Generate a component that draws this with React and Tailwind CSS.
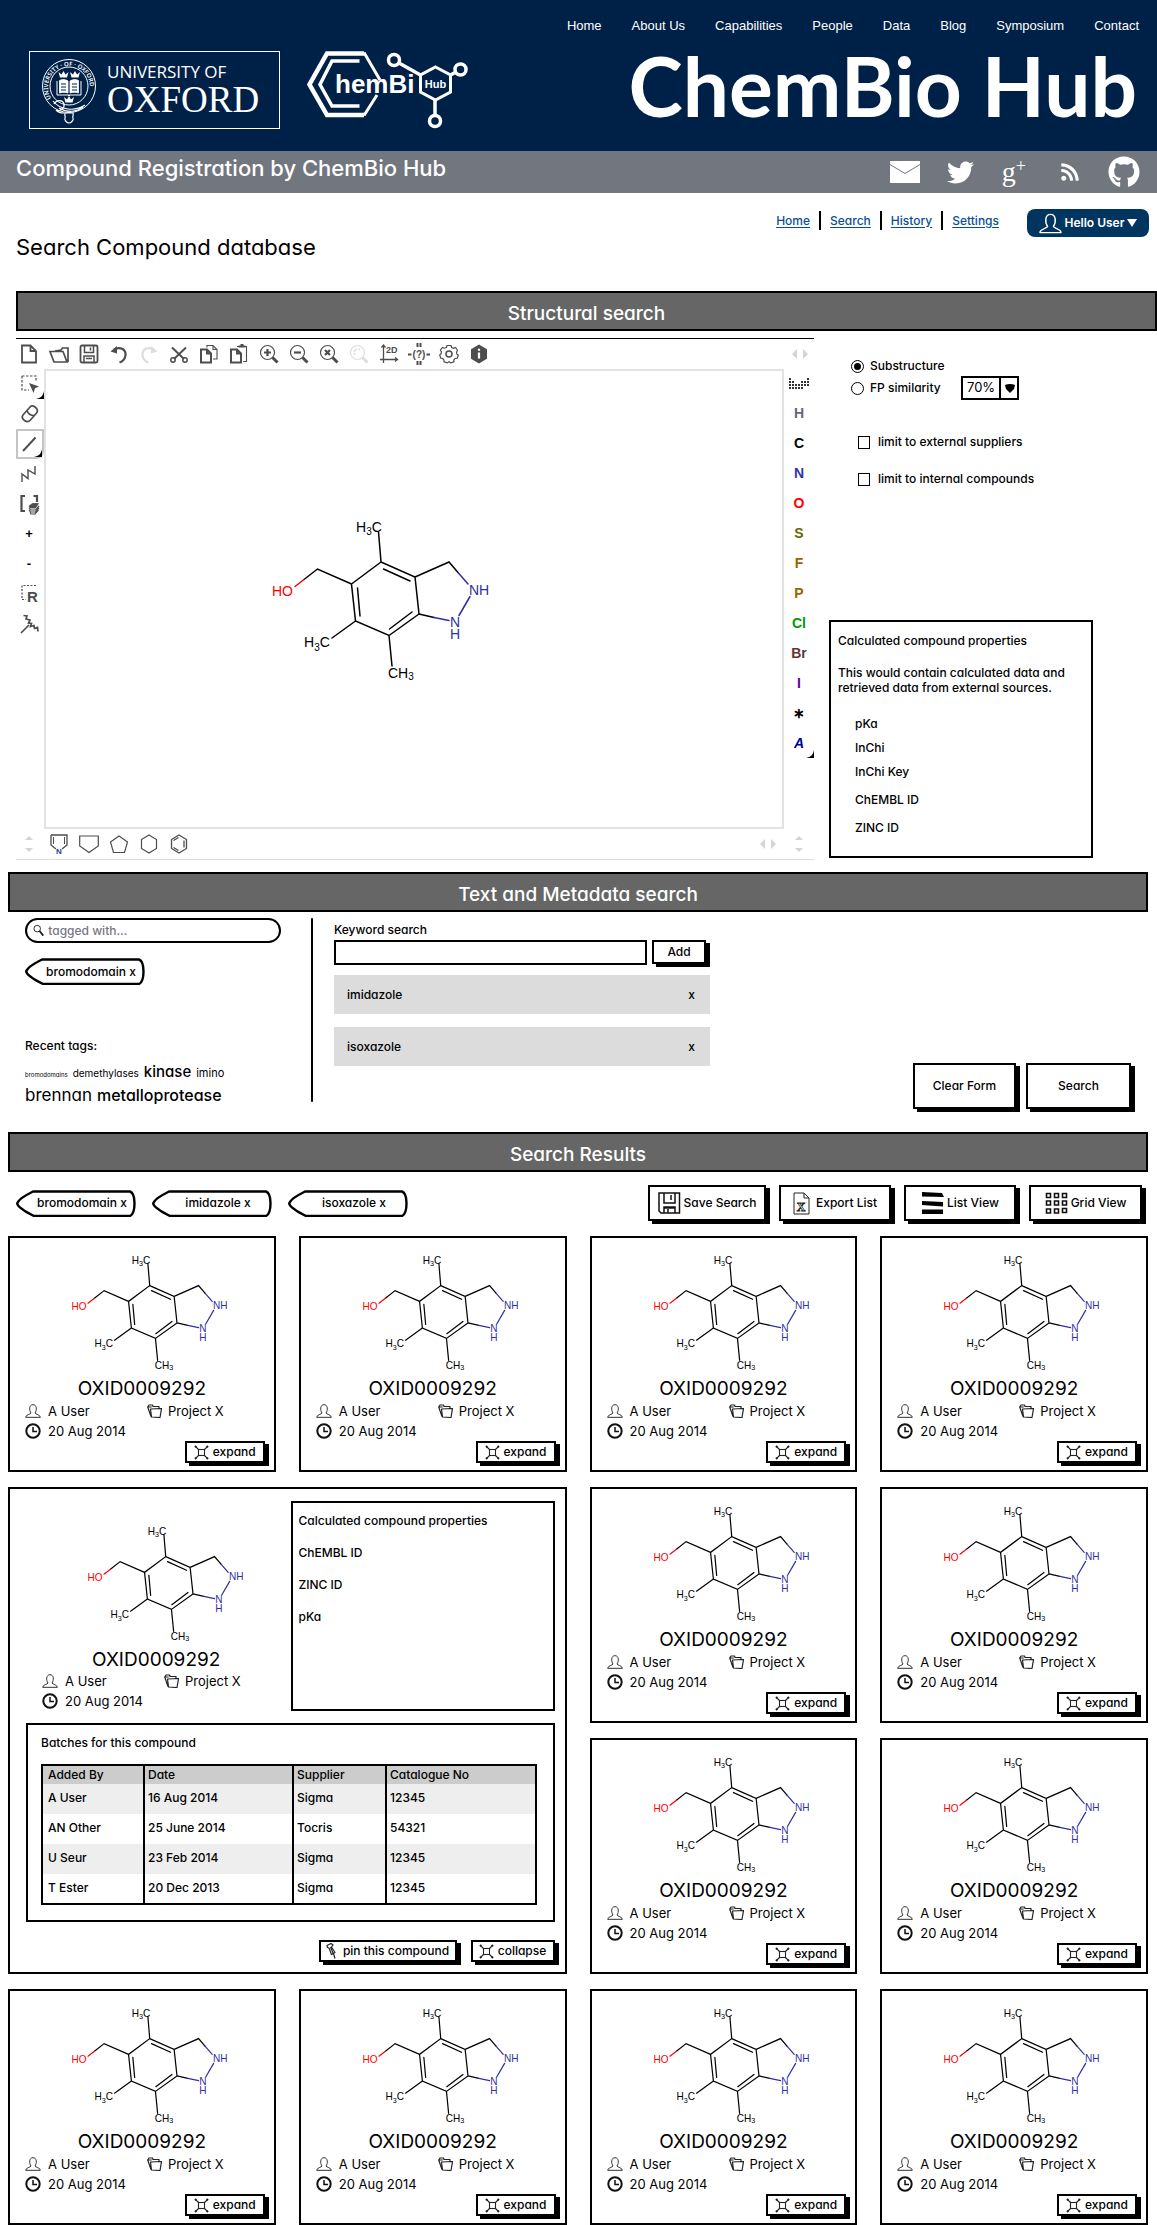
import React from "react";
import { FaTwitter, FaRss, FaGithub } from "react-icons/fa";

const box = "border-2 border-black bg-white";
const raised =
  "flex items-center justify-center border-2 border-black bg-white shadow-[4px_3px_0_#000] cursor-pointer whitespace-nowrap";

/* ---------- header drawings ---------- */

function OxfordCrest() {
  return (
    <svg width="54" height="66" viewBox="0 0 54 66" fill="none" stroke="#fff" className="overflow-visible" role="img" aria-label="University crest">
      <defs>
        <path id="crest-ring" d="M10.500 42 A21 21 0 1 1 43.500 42" />
      </defs>
      <circle cx="27" cy="28" r="26.500" strokeWidth="1" />
      <circle cx="27" cy="28" r="19" strokeWidth="1" />
      <text fill="#fff" stroke="none" fontSize="6" fontWeight="600" fontFamily="Noto Sans, sans-serif">
        <textPath href="#crest-ring" startOffset="2">UNIVERSITY · OF · OXFORD</textPath>
      </text>
      <path d="M17.500 22.500c3-1.500 6-1 8.500.5v12c-2.500-1-5.500-1-8.500 0zM28 23c2.500-1.500 5.500-2 8.500-.5V35c-3-1-6-1-8.500 0z" fill="#fff" strokeWidth=".8" />
      <path d="M19 26h5M19 29h5M19 32h5M30 26h5M30 29h5M30 32h5" stroke="#002147" strokeWidth="1" />
      <path d="M15 23v14h24V23M26 37l1 1 1-1" strokeWidth="1" />
      <path d="M18 19.500h7l1.500-5.500-3 2.500-2-3.500-2 3.500-3-2.500zM29.500 19.500h7l1.500-5.500-3 2.500-2-3.500-2 3.500-3-2.500zM23.500 44.500h7l1.500-5.500-3 2.500-2-3.500-2 3.500-3-2.500z" fill="#fff" stroke="none" />
      <path d="M12 46c3-5 9-4 10 0s-4 8-8 6M17 50c8 5 18 4 24-1M11 43c7 9 22 11 32 4M14 52c2 2 5 3 8 3" strokeWidth="1.200" />
      <path d="M23 55c-1 3 1 3 0 5s2 5 4 5 5-3 4-5 1-2 0-5z" strokeWidth="1.200" />
    </svg>
  );
}

function ChemBioLogo() {
  return (
    <svg width="162" height="78" viewBox="307 51 162 78" fill="none" stroke="#fff" role="img" aria-label="ChemBio Hub logo">
      <path d="M364 53.500 H327 L309.500 84.500 L327 115 H364" strokeWidth="4.500" />
      <path d="M364 52.500 L380 80 M364 115.500 L377 95" strokeWidth="3" />
      <path d="M359.500 61 H332 L320 84.500 L332 106 H359.500" strokeWidth="3.500" />
      <text x="335" y="93" fill="#fff" stroke="none" fontSize="26" fontWeight="700" fontFamily="Liberation Sans, sans-serif">hemBi</text>
      <path d="M435.500 67 L450.500 75 V92 L435.500 100 L420.500 92 V75 Z" strokeWidth="3" />
      <text x="435.500" y="88" textAnchor="middle" fill="#fff" stroke="none" fontSize="11" fontWeight="700" fontFamily="Liberation Sans, sans-serif">Hub</text>
      <path d="M399 63 L420.500 75 M450.500 75 L456 72 M435 100 V115" strokeWidth="3.500" />
      <circle cx="394" cy="60" r="5.500" strokeWidth="3.500" />
      <circle cx="460.500" cy="69.500" r="5.500" strokeWidth="3.500" />
      <circle cx="435" cy="121" r="5.500" strokeWidth="3.500" />
    </svg>
  );
}

/* ---------- molecule ---------- */

function Molecule({ className, thin }) {
  const blue = "#3030a0";
  return (
    <svg className={"overflow-visible " + className} viewBox="270 518 220 162" fill="none" stroke="#000" strokeWidth={thin ? 1.7 : 1.5} strokeLinecap="round" role="img" aria-label="Compound structure">
      <path d="M378.500 532 L381 562 M381 562 L415 577 L419 614 L389 635.500 L355.500 621 L351.500 584 Z M383.500 569 L410 581 M357.500 588 L360 616 M412 612 L389.500 629 M351.500 584 L317.500 569 L304 579.500 M355.500 621 L332 638 M389 635.500 L392 666 M415 577 L449 562 L458 572.500 M419 614 L434 617.500" />
      <path d="M304 579.500 L295 586.500" stroke="#f00" />
      <path d="M458 572.500 L468 584 M434 617.500 L449 620.500 M459 615.500 L470 596.500" stroke={blue} />
      <g stroke="none" fill="#000" fontSize="14" fontFamily="Liberation Sans, sans-serif">
        <text x="356" y="532">H<tspan fontSize="10" dy="3">3</tspan><tspan dy="-3">C</tspan></text>
        <text x="304" y="647">H<tspan fontSize="10" dy="4">3</tspan><tspan dy="-4">C</tspan></text>
        <text x="388" y="678">CH<tspan fontSize="10" dy="2">3</tspan></text>
        <text x="272" y="596" fill="#f00">HO</text>
        <text x="469" y="595" fill={blue}>NH</text>
        <text x="450" y="627" fill={blue}>N</text>
        <text x="450" y="639" fill={blue}>H</text>
      </g>
    </svg>
  );
}

/* ---------- editor icons ---------- */

function Ico({ children, faded, size = 20 }) {
  return (
    <svg width={size} height={size} viewBox="0 0 20 20" fill="none" stroke={faded ? "#ddd" : "#4d4d4d"} strokeWidth="1.500" className="overflow-visible">
      {children}
    </svg>
  );
}

const lens = (
  <>
    <circle cx="8.500" cy="8.500" r="7" strokeWidth="1.200" />
    <path d="M13.500 13.500l5 5" strokeWidth="3" />
  </>
);

const topTools = [
  ["New", <Ico key="i"><path d="M3 1.500h8.500l5.500 5.500v11.500H3zM11.500 1.500V7H17" strokeWidth="1.800" /></Ico>],
  ["Open", <Ico key="i"><path d="M1 7.500h13l4 10.500H5zM6 7l6-1 1.500-2H19v14" strokeWidth="1.700" /></Ico>],
  ["Save", <Ico key="i"><rect x="1.500" y="1.500" width="17" height="17" rx="1.500" strokeWidth="1.800" /><path d="M5.500 2v6.500h9V2M11.500 3.500v3M5 18v-6h10v6M7 14.500h6" /></Ico>],
  ["Undo", <Ico key="i"><path d="M5 5.500C12 2 17 6 16.500 11c-.3 4-3 6.500-6 7.500" strokeWidth="2.200" /><path d="M1.500 7.500L8 2v7.500z" fill="#4d4d4d" stroke="none" /></Ico>],
  ["Redo", <Ico key="i" faded><path d="M15 5.500C8 2 3 6 3.500 11c.3 4 3 6.500 6 7.500" strokeWidth="2.200" /><path d="M18.500 7.500L12 2v7.500z" fill="#ddd" stroke="none" /></Ico>],
  ["Cut", <Ico key="i"><path d="M3 3.500L15 15M17 3.500L5 15" strokeWidth="1.900" /><circle cx="4" cy="16" r="2.200" /><circle cx="16" cy="16" r="2.200" /></Ico>],
  ["Copy", <Ico key="i"><path d="M2 5.500h6l4 4v9H2zM8 5.500v4h4" strokeWidth="2" /><path d="M8 3.500V1.500h6l4 4V15h-4M14 1.500v4h4" strokeWidth="1.100" /></Ico>],
  ["Paste", <Ico key="i"><path d="M2 5.500h6l4 4v9H2zM8 5.500v4h4" strokeWidth="2" /><path d="M8 2.500h9.500v15H14" strokeWidth="1.100" /><path d="M9.500 3.500V1.500h2V0h3v1.500h2v2z" fill="#4d4d4d" stroke="none" /></Ico>],
  ["Zoom in", <Ico key="i">{lens}<path d="M8.500 5v7M5 8.500h7" strokeWidth="2.200" /></Ico>],
  ["Zoom out", <Ico key="i">{lens}<path d="M5 8.500h7" strokeWidth="2.200" /></Ico>],
  ["Zoom reset", <Ico key="i">{lens}<path d="M6 6l5 5M11 6l-5 5" strokeWidth="2.200" /></Ico>],
  ["Zoom selection", <Ico key="i" faded>{lens}<path d="M5.500 11V5.500H11" strokeDasharray="2 1" /></Ico>],
  ["Clean 2D", <Ico key="i"><path d="M4.500 1v18M1 15.500h17M2.500 3.500l2-2.500 2 2.500M16 13.500l2.500 2-2.500 2" strokeWidth="1.300" /><text x="7" y="8.500" fontSize="9" fontWeight="700" fill="#4d4d4d" stroke="none" fontFamily="Liberation Sans, sans-serif">2D</text></Ico>],
  ["Check structure", <svg key="i" width="24" height="24" viewBox="0 0 24 24" stroke="#4d4d4d" strokeWidth="2"><path d="M10.500 1v4M13.500 1v4M10.500 19v4M13.500 19v4M1 12.500h3.500M19.500 12.500H23" /><text x="12" y="15.500" textAnchor="middle" fontSize="10" fontWeight="700" fill="#4d4d4d" stroke="none" fontFamily="Liberation Sans, sans-serif">(?)</text></svg>],
  ["Options", <Ico key="i"><path d="M8 1.500h4l.6 2 2 .9 1.900-1 2 2.800-1 1.800.3 2 1.500 1.200-1 3-2.300.3-1.200 1.400.2 2-3.200 1-1.800-1.200-1.900 1.200-3-1-.2-2-1.200-1.400-2-.5-1-3 1.400-1.200.3-2-1-1.800 2-2.600 2 .8 2-.7z" strokeWidth="1.200" /><circle cx="10" cy="10" r="3" /></Ico>],
  ["About", <Ico key="i"><path d="M10 .5l8 4.700v9.600l-8 4.700-8-4.700V5.200z" fill="#4d4d4d" stroke="none" /><path d="M10 8.500v6M10 4.700v2" stroke="#fff" strokeWidth="2.200" /></Ico>],
];

const sideTools = [
  ["Select", <Ico key="i"><path d="M3 2h14v6M3 2v14h7" strokeDasharray="2.500 1.500" strokeWidth="1.200" /><path d="M10 9l10 3.500-4 1.700L14.500 19z" fill="#4d4d4d" stroke="none" /></Ico>],
  ["Erase", <Ico key="i"><path d="M4 11l7-8c1.500-1.500 3-1.500 5 0s3.500 4 1.500 6l-6 7c-2 2-4 2-6 .500S2.500 13 4 11zM8 6.500c1 3 4 5 7 5" strokeWidth="1.700" /></Ico>],
  ["Bond", <Ico key="i"><path d="M4 17L16.500 3.500" strokeWidth="1.900" /></Ico>],
  ["Chain", <Ico key="i"><path d="M3 18v-8l6 4.500V6l7 4V2" strokeWidth="1.400" /></Ico>],
  ["Template group", <Ico key="i"><path d="M6 2H2.500v15H6M14.500 2H18v6" strokeWidth="2.200" /><path d="M10 12l3.500-2.500h6l-3 4.500H11z" fill="#4d4d4d" strokeWidth=".8" /><path d="M10 14l1.500 2h5l3.500-4M10 16l1.500 2h5l3.500-4M11 18.500l1 1.500h4l3.500-4" strokeWidth="1.200" /></Ico>],
  ["Increase charge", <b key="i">+</b>],
  ["Decrease charge", <b key="i">-</b>],
  ["R group", <Ico key="i"><path d="M17 1.500H3v14h4" strokeDasharray="2 1.500" strokeWidth="1.200" /><text x="8" y="17.500" fontSize="15" fontWeight="700" fill="#4d4d4d" stroke="none" fontFamily="Liberation Sans, sans-serif">R</text></Ico>],
  ["Fragment", <Ico key="i"><path d="M2 19L10 11M4.500 1.500l3.500.5-1 3 4 1-1.500 3 3 .5-1 3 3.500-1 .5 3 3-1 .5 4" strokeWidth="1.700" /></Ico>],
];

const atoms = [
  ["H", "text-[#666677]"],
  ["C", "text-black"],
  ["N", "text-[#3333aa]"],
  ["O", "text-[#ff0000]"],
  ["S", "text-[#666600]"],
  ["F", "text-[#996600]"],
  ["P", "text-[#996600]"],
  ["Cl", "text-[#009900]"],
  ["Br", "text-[#663333]"],
  ["I", "text-[#660099]"],
  ["∗", "text-black"],
  ["A", "text-[#000099] italic"],
];

function Corner() {
  return (
    <svg className="absolute right-0 bottom-0" width="8" height="8" viewBox="0 0 8 8">
      <path d="M8 0v8H0C5 7 7 5 8 0z" fill="#000" />
    </svg>
  );
}

function ArrowsH() {
  return (
    <svg width="16" height="10" viewBox="0 0 16 10" fill="#d4d4d4"><path d="M5 0v10L0 5zM11 0v10l5-5z" /></svg>
  );
}

function ArrowsV() {
  return (
    <svg width="10" height="16" viewBox="0 0 10 16" fill="#d4d4d4"><path d="M1 4h8L5 0zM1 12h8l-4 4z" /></svg>
  );
}

const rings = [
  ["Pyrrole", <Ico key="i"><path d="M2 1h16v10l-5 4M7 15l-5-4V1" strokeWidth="1.300" /><path d="M4.500 3v7M15.500 3v7" strokeWidth="1" /><text x="10" y="20" textAnchor="middle" fontSize="8" fill="#3333aa" stroke="none" fontWeight="700" fontFamily="Liberation Sans, sans-serif">N</text></Ico>],
  ["Cyclopentane wide", <Ico key="i"><path d="M.700 2h18.600v10L10 18.500.700 12z" strokeWidth="1.200" /></Ico>],
  ["Cyclopentane", <Ico key="i"><path d="M10 2l8.500 6-3 10.500h-11L1.500 8z" strokeWidth="1.200" /></Ico>],
  ["Cyclohexane", <Ico key="i"><path d="M10 1l7.500 4.500v9L10 19l-7.500-4.500v-9z" strokeWidth="1.200" /></Ico>],
  ["Benzene", <Ico key="i"><path d="M10 1l7.500 4.500v9L10 19l-7.500-4.500v-9zM15 6.500v7M9.500 16.500L4.500 13.500M4.500 6.500l5-3" strokeWidth="1.300" /></Ico>],
];

function StructureEditor() {
  return (
    <div className="w-[798px] shrink-0 border-t border-b border-t-black border-b-[#dddddd] font-['Liberation_Sans',sans-serif]">
      <div className="flex h-[30px] items-center">
        <div className="-ml-0.5 flex">
          {topTools.map(([name, icon]) => (
            <button key={name} aria-label={name} className="flex h-[30px] w-[30px] items-center justify-center">{icon}</button>
          ))}
        </div>
        <div className="mr-1.5 ml-auto"><ArrowsH /></div>
      </div>
      <div className="flex">
        <div className="w-7 text-center text-[13px]">
          {sideTools.map(([name, icon], i) => (
            <button
              key={name}
              aria-label={name}
              className={
                "relative flex h-[30px] w-full items-center justify-center pr-0.5 " +
                (i === 2 ? "rounded-br-lg border-2 border-[#c4c4c4]" : "")
              }
            >
              {icon}
              {(i === 0 || i === 2) && <Corner />}
            </button>
          ))}
        </div>
        <div className="relative h-[460px] flex-1 border-2 border-[#e2e2e2] bg-white">
          <Molecule className="absolute top-[147px] left-[224px] w-[220px]" />
        </div>
        <div className="w-[30px] text-[14px] font-bold">
          <button aria-label="Periodic table" className="flex h-[29px] w-full items-center justify-center">
            <svg width="20" height="14" viewBox="0 0 20 14" stroke="#333" strokeWidth="2" strokeDasharray="2 1">
              <path d="M0 2h2.500M18 2h2M0 5h5M12 5h8M0 8h20M0 11h14" />
            </svg>
          </button>
          {atoms.map(([a, c]) => (
            <button key={a} className={"relative flex h-[30px] w-full items-center justify-center " + c}>
              {a}
              {a === "A" && <Corner />}
            </button>
          ))}
        </div>
      </div>
      <div className="flex h-[30px] items-center">
        <div className="flex w-7 justify-center pr-0.5"><ArrowsV /></div>
        {rings.map(([name, icon]) => (
          <button key={name} aria-label={name} className="flex h-[30px] w-[30px] items-center justify-center">{icon}</button>
        ))}
        <div className="mr-[18px] ml-auto"><ArrowsH /></div>
        <div className="mr-2.5"><ArrowsV /></div>
      </div>
    </div>
  );
}

/* ---------- small icons ---------- */

function Person({ size = 16, color = "#333" }) {
  return (
    <svg width={size} height={size} viewBox="0 0 24 22" fill="none" stroke={color} strokeWidth="1.500" strokeLinejoin="round" aria-hidden="true">
      <path d="M9 14C6 10 6 1.500 12 1.500S18 10 15 14c.5 2 8 2.500 8 6.500H1C1 16.500 8.500 16 9 14z" />
    </svg>
  );
}

function Folder() {
  return (
    <svg width="15" height="14" viewBox="0 0 15 14" fill="none" stroke="#222" strokeWidth="1.200" strokeLinejoin="round" aria-hidden="true">
      <path d="M4 12.500L.700 3 2 1h3.500l.5 1.500h6V4.500M4.500 13L3.500 5l11-.500L13 13.500zM.700 3h4" />
    </svg>
  );
}

function Clock() {
  return (
    <svg width="16" height="16" viewBox="0 0 16 16" fill="none" stroke="#111" strokeWidth="2" aria-hidden="true">
      <circle cx="8" cy="8" r="6.700" /><path d="M8 4v4.500h4" strokeWidth="1.500" />
    </svg>
  );
}

function Resize() {
  return (
    <svg width="15" height="15" viewBox="0 0 15 15" fill="none" stroke="#222" strokeWidth="1.100" aria-hidden="true">
      <rect x="4.500" y="4.500" width="6" height="6" />
      <path d="M4.500 4.500L1 1M10.500 4.500L14 1M4.500 10.500L1 14M10.500 10.500L14 14" />
      <path d="M1 1l2 .5M14 1l-2 .5M1 14l2-.5M14 14l-2-.5M1 1l.5 2M14 1l-.5 2M1 14l.5-2M14 14l-.5-2" strokeWidth=".8" />
    </svg>
  );
}

function Pin() {
  return (
    <svg width="11" height="16" viewBox="0 0 11 16" fill="none" stroke="#222" strokeWidth="1.200" strokeLinejoin="round" aria-hidden="true">
      <path d="M1 2.500L5 .500 7 2 5.500 4 9 9.500 5.500 11.500 3 5 1.500 4.500zM7.500 10.500l1.500 5M4.500 4l2.500 6" />
    </svg>
  );
}

/* ---------- building blocks ---------- */

function Banner({ children }) {
  return (
    <h2 className="flex h-10 items-center justify-center border-2 border-black bg-[#666666] pt-1.5 text-[19px] font-medium text-white">
      {children}
    </h2>
  );
}

function Tag({ children }) {
  return (
    <button className="relative flex h-[27px] w-[120px] items-center justify-center pl-3">
      <svg className="absolute inset-0 h-full w-full" viewBox="0 0 120 27" fill="none" stroke="#000" strokeWidth="2.400" strokeLinejoin="round" aria-hidden="true">
        <path d="M17 1.500 H114 Q118.500 3 118.500 13.500 Q118.500 24 114 26 H18 Q2 18 1.200 13.500 Q2 9 17 1.500z" />
      </svg>
      <span className="relative">{children} x</span>
    </button>
  );
}

function Meta() {
  return (
    <div className="text-[13px] leading-5 font-normal">
      <div className="flex items-center">
        <Person /><span className="ml-[7px] w-[99px]">A User</span>
        <Folder /><span className="ml-1.5">Project X</span>
      </div>
      <div className="flex items-center"><Clock /><span className="ml-[7px]">20 Aug 2014</span></div>
    </div>
  );
}

function Card() {
  return (
    <article className={box + " flex h-[236px] flex-col pt-4"}>
      <Molecule thin className="ml-15 w-[158px] shrink-0" />
      <h3 className="mt-[7px] text-center text-[19px] leading-6 font-normal">OXID0009292</h3>
      <div className="pl-[15px]"><Meta /></div>
      <button className={raised + " mt-auto mr-[9px] mb-[8px] h-[22px] w-20 gap-1 self-end"}>
        <Resize />expand
      </button>
    </article>
  );
}

const batches = [
  ["A User", "16 Aug 2014", "Sigma", "12345"],
  ["AN Other", "25 June 2014", "Tocris", "54321"],
  ["U Seur", "23 Feb 2014", "Sigma", "12345"],
  ["T Ester", "20 Dec 2013", "Sigma", "12345"],
];

function ExpandedCard() {
  return (
    <article className={box + " col-span-2 row-span-2 flex flex-col px-2.5 pt-3"}>
      <div className="flex pl-1.5">
        <div className="flex-1 pt-6">
          <Molecule thin className="ml-15 w-[158px]" />
          <h3 className="mt-2 ml-[66px] text-[19px] leading-[22px] font-normal">OXID0009292</h3>
          <div className="pl-4"><Meta /></div>
        </div>
        <div className={box + " h-[210px] w-[264px] px-1.5 pt-1.5"}>
          <p className="leading-6">Calculated compound properties</p>
          <p className="mt-2 leading-6">ChEMBL ID</p>
          <p className="mt-2 leading-6">ZINC ID</p>
          <p className="mt-2 leading-6">pKa</p>
        </div>
      </div>
      <div className={box + " mt-3 ml-1.5 h-[199px] px-[13px] pt-1.5"}>
        <p className="leading-6">Batches for this compound</p>
        <table className="mt-[9px] w-full max-w-[496px] border-2 border-black text-left">
          <thead>
            <tr className="bg-[#cccccc]">
              {["Added By", "Date", "Supplier", "Catalogue No"].map((h, i) => (
                <th
                  key={h}
                  className={
                    "h-[18px] border-r-2 border-black p-0 leading-[18px] font-medium " +
                    ["w-[102px] pl-[5px]", "w-[149px] pl-[3px]", "w-[93px] pl-[3px]", "pl-[3px]"][i]
                  }
                >
                  {h}
                </th>
              ))}
            </tr>
          </thead>
          <tbody>
            {batches.map((r) => (
              <tr key={r[0]} className="odd:bg-[#eeeeee]">
                {r.map((c, i) => (
                  <td key={i} className={"h-[30px] border-r-2 border-black p-0 pb-0.5 " + (i === 0 ? "pl-[5px]" : "pl-[3px]")}>{c}</td>
                ))}
              </tr>
            ))}
          </tbody>
        </table>
      </div>
      <div className="mt-auto mb-[10px] flex justify-end gap-[14px]">
        <button className={raised + " h-[22px] w-[138px] gap-1.5"}><Pin />pin this compound</button>
        <button className={raised + " h-[22px] w-[84px] gap-1"}><Resize />collapse</button>
      </div>
    </article>
  );
}

const navItems = ["Home", "About Us", "Capabilities", "People", "Data", "Blog", "Symposium", "Contact"];
const subNav = ["Home", "Search", "History", "Settings"];

export default function App() {
  return (
    <div className="overflow-hidden bg-white font-[Inter,sans-serif] text-[12px] font-medium text-black [font-feature-settings:'cv11']">
      <header className="flex justify-between bg-[#002147] pr-[18px] pl-[29px] font-normal text-white">
        <div className="flex gap-[27px] pt-[51px] pb-[22px]">
          <div className="flex h-[78px] w-[251px] border border-white pt-1.5 pl-3">
            <OxfordCrest />
            <div className="ml-[11px] whitespace-nowrap">
              <div className="mt-1 font-['Open_Sans',sans-serif] text-[17px] leading-5">UNIVERSITY OF</div>
              <div className="font-['Liberation_Serif',serif] text-[37px] leading-9">OXFORD</div>
            </div>
          </div>
          <ChemBioLogo />
        </div>
        <div className="flex flex-col items-end pt-4">
          <nav className="flex gap-[30px] font-['Liberation_Sans',sans-serif] text-[13px] leading-5">
            {navItems.map((n) => <a key={n} href="#">{n}</a>)}
          </nav>
          <h1 className="mr-0.5 font-[Lato,sans-serif] text-[82px] leading-[98px] font-bold whitespace-nowrap">ChemBio Hub</h1>
        </div>
      </header>

      <div className="flex h-[42px] justify-between bg-[#72767f] pr-[17px] pl-4 text-white">
        <p className="text-[22px] leading-[34px] font-medium">Compound Registration by ChemBio Hub</p>
        <div className="flex items-center">
          <a href="#" aria-label="Email">
            <svg width="30" height="22" viewBox="0 0 30 22"><path d="M0 0h30v22H0z" fill="#fff" /><path d="M0 3.500l15 9 15-9" fill="none" stroke="#72767f" /></svg>
          </a>
          <a href="#" aria-label="Twitter" className="ml-[27px]"><FaTwitter size={27} /></a>
          <a href="#" aria-label="Google plus" className="ml-7 flex font-['Liberation_Serif',serif] text-[28px] leading-6 font-normal">
            g<span className="-mt-1 text-[18px] leading-5">+</span>
          </a>
          <a href="#" aria-label="RSS" className="ml-[34px]"><FaRss size={20} /></a>
          <a href="#" aria-label="GitHub" className="ml-7"><FaGithub size={32} /></a>
        </div>
      </div>

      <div className="flex justify-between pr-2 pl-4">
        <h2 className="pt-10 text-[22px] leading-7 font-normal">Search Compound database</h2>
        <div className="flex items-start pt-4">
          <nav className="flex items-center pt-0.5 leading-5">
            {subNav.map((n, i) => (
              <React.Fragment key={n}>
                {i > 0 && <span className="mx-[9px] h-[19px] w-0.5 bg-black" />}
                <a href="#" className="leading-4 text-[#0b4f93] underline underline-offset-2">{n}</a>
              </React.Fragment>
            ))}
          </nav>
          <button className="ml-7 flex h-7 w-[122px] items-center justify-center gap-[3px] rounded-lg bg-[#003560] font-semibold whitespace-nowrap text-white">
            <Person size={23} color="#fff" />Hello User
            <svg width="10" height="8" viewBox="0 0 10 8" fill="#fff" aria-hidden="true"><path d="M0 0h10L5 8z" /></svg>
          </button>
        </div>
      </div>

      <section className="mt-[30px] ml-4">
        <Banner>Structural search</Banner>
        <div className="mt-[7px] flex">
          <StructureEditor />
          <div className="ml-[15px] flex w-[264px] flex-col justify-between pb-0.5">
            <div className="pt-[17px] pl-[22px]">
              <label className="flex h-[22px] items-center gap-[6px]">
                <input type="radio" name="mode" defaultChecked className="h-[13px] w-[13px] appearance-none rounded-full border border-black bg-white p-0.5 checked:bg-black checked:bg-clip-content" />
                Substructure
              </label>
              <div className="flex h-[22px] items-center">
                <label className="flex items-center gap-[6px]">
                  <input type="radio" name="mode" className="h-[13px] w-[13px] appearance-none rounded-full border border-black bg-white p-0.5 checked:bg-black checked:bg-clip-content" />
                  FP similarity
                </label>
                <div className="relative mr-[74px] ml-auto">
                  <select aria-label="Similarity threshold" className="h-[24px] w-[58px] appearance-none border-2 border-black bg-white pl-1 text-[13px] font-normal">
                    <option>70%</option>
                  </select>
                  <span className="pointer-events-none absolute inset-y-0 right-0 flex w-5 items-center justify-center border-l-2 border-black">
                    <svg width="10" height="9" viewBox="0 0 10 9"><path d="M0 1q5-2 10 0l-1 4-4 4-4-4z" /></svg>
                  </span>
                </div>
              </div>
              <label className="mt-8 ml-[7px] flex h-[22px] items-center gap-2">
                <input type="checkbox" className="h-[13px] w-3 appearance-none border border-black bg-white checked:bg-black" />
                limit to external suppliers
              </label>
              <label className="mt-[15px] ml-[7px] flex h-[22px] items-center gap-2">
                <input type="checkbox" className="h-[13px] w-3 appearance-none border border-black bg-white checked:bg-black" />
                limit to internal compounds
              </label>
            </div>
            <div className={box + " h-[238px] px-[7px] pt-[11px] leading-[15px]"}>
              <p>Calculated compound properties</p>
              <p className="mt-[17px]">This would contain calculated data and retrieved data from external sources.</p>
              <ul className="mt-[21px] pl-[17px]">
                <li className="h-6">pKa</li>
                <li className="h-6">InChi</li>
                <li className="h-7">InChi Key</li>
                <li className="h-7">ChEMBL ID</li>
                <li>ZINC ID</li>
              </ul>
            </div>
          </div>
        </div>
      </section>

      <section className="mt-3 mr-[9px] ml-2">
        <Banner>Text and Metadata search</Banner>
        <div className="flex pt-1.5 pl-[17px]">
          <div className="w-[256px] pb-1">
            <label className="flex h-[25px] items-center rounded-full border-2 border-black pl-1.5">
              <svg width="12" height="13" viewBox="0 0 12 13" fill="none" stroke="#222" aria-hidden="true"><circle cx="4.500" cy="4.500" r="3.500" /><path d="M7 7l4 5" strokeWidth="2" /></svg>
              <input aria-label="Tagged with" placeholder="tagged with..." className="ml-1 w-full bg-transparent outline-none placeholder:text-[#777784]" />
            </label>
            <div className="mt-[15px]"><Tag>bromodomain</Tag></div>
            <p className="mt-[51px] leading-5">Recent tags:</p>
            <div className="mt-2 flex h-[22px] items-baseline gap-[5px] leading-none">
              <a href="#" className="text-[6px] font-normal">bromodomains</a>
              <a href="#" className="text-[10px] font-normal">demethylases</a>
              <a href="#" className="text-[15px]">kinase</a>
              <a href="#" className="text-[11px] font-normal">imino</a>
            </div>
            <div className="flex h-[22px] items-baseline gap-[5px] pt-px leading-none">
              <a href="#" className="text-[17px] font-normal">brennan</a>
              <a href="#" className="text-[16px]">metalloprotease</a>
            </div>
          </div>
          <div className="ml-[30px] h-[184px] w-0.5 rounded-full bg-black" />
          <div className="ml-[21px] w-[372px]">
            <label htmlFor="kw" className="block pt-0.5 leading-5">Keyword search</label>
            <div className="flex justify-between">
              <input id="kw" className="h-[25px] w-[313px] border-2 border-black px-1 outline-none" />
              <button className={raised + " h-6 w-[54px]"}>Add</button>
            </div>
            <div className="mt-[10px] -mr-1 flex flex-col gap-[13px]">
              {["imidazole", "isoxazole"].map((k) => (
                <div key={k} className="flex h-[39px] items-center justify-between bg-[#dcdcdc] pr-[15px] pl-[13px]">
                  {k}<button aria-label={"Remove " + k}>x</button>
                </div>
              ))}
            </div>
          </div>
          <div className="mr-[17px] ml-auto flex gap-[10px] self-end pb-[3px]">
            <button className={raised + " h-[46px] w-[103px]"}>Clear Form</button>
            <button className={raised + " h-[46px] w-[105px]"}>Search</button>
          </div>
        </div>
      </section>

      <section className="mt-5 mr-[9px] ml-2">
        <Banner>Search Results</Banner>
        <div className="flex items-center justify-between pt-[13px] pr-1.5 pl-2">
          <div className="flex gap-4">
            <Tag>bromodomain</Tag>
            <Tag>imidazole</Tag>
            <Tag>isoxazole</Tag>
          </div>
          <div className="flex gap-[13px]">
            <button className={raised + " h-9 w-[118px] gap-[3px]"}>
              <svg width="23" height="22" viewBox="0 0 23 22" fill="none" stroke="#111" strokeWidth="1.500"><path d="M1 1h20.500v20H3l-2-2zM6 1v10h11V1M13 3v5M6 21v-6h11v6M6 16h11M10 17v4" /></svg>
              Save Search
            </button>
            <button className={raised + " h-9 w-[112px] gap-1.5"}>
              <svg width="17" height="23" viewBox="0 0 17 23" fill="none" stroke="#222"><path d="M1 1h10l5 5v16H1zM11 1v5h5" /><text x="8" y="18.500" textAnchor="middle" fontSize="12" fontFamily="Liberation Serif, serif" fontWeight="700" fill="#fff" stroke="#222" strokeWidth=".8">X</text></svg>
              Export List
            </button>
            <button className={raised + " h-9 w-[112px] gap-[3px]"}>
              <svg width="23" height="22" viewBox="0 0 23 22"><path d="M1 0l20 1 2 4-22-.500zM1 9l21 1v4.500L1 13zM1 17.500h21V22H1z" /></svg>
              List View
            </button>
            <button className={raised + " h-9 w-[113px] gap-[3px]"}>
              <svg width="23" height="22" viewBox="0 0 23 22" fill="none" stroke="#111" strokeWidth="1.600"><path d="M1.500 1.500h4v4h-4zM9.500 1.500h4v4h-4zM17.500 1.500h4v4h-4zM1.500 9h4v4h-4zM9.500 9h4v4h-4zM17.500 9h4v4h-4zM1.500 17h4v4h-4zM9.500 17h4v4h-4zM17.500 16.500h4v4h-4z" /></svg>
              Grid View
            </button>
          </div>
        </div>
        <div className="mt-[15px] grid grid-cols-4 gap-x-[23px] gap-y-[15px]">
          <Card /><Card /><Card /><Card />
          <ExpandedCard /><Card /><Card />
          <Card /><Card />
          <Card /><Card /><Card /><Card />
        </div>
      </section>
    </div>
  );
}
